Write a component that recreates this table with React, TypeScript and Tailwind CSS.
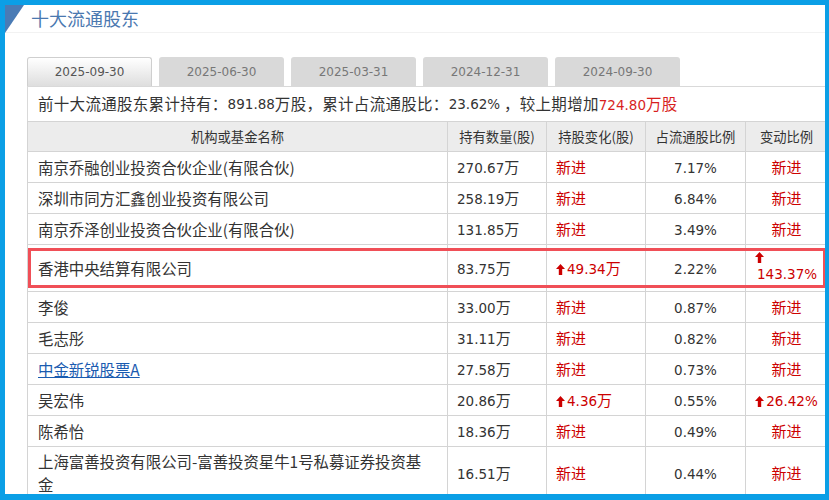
import React from 'react';

// 十大流通股东 panel: period tabs, summary line and the holders table.

type Holder = {
  name: string;
  hold: string;
  change?: string; // undefined => 新进
  pct: string;
  ratio?: string; // undefined => 新进
  link?: boolean;
  highlight?: boolean;
  wrapRatio?: boolean;
};

const TABS = ['2025-09-30', '2025-06-30', '2025-03-31', '2024-12-31', '2024-09-30'];

const HOLDERS: Holder[] = [
  { name: '南京乔融创业投资合伙企业(有限合伙)', hold: '270.67', pct: '7.17%' },
  { name: '深圳市同方汇鑫创业投资有限公司', hold: '258.19', pct: '6.84%' },
  { name: '南京乔泽创业投资合伙企业(有限合伙)', hold: '131.85', pct: '3.49%' },
  { name: '香港中央结算有限公司', hold: '83.75', change: '49.34', pct: '2.22%', ratio: '143.37%', highlight: true, wrapRatio: true },
  { name: '李俊', hold: '33.00', pct: '0.87%' },
  { name: '毛志彤', hold: '31.11', pct: '0.82%' },
  { name: '中金新锐股票A', hold: '27.58', pct: '0.73%', link: true },
  { name: '吴宏伟', hold: '20.86', change: '4.36', pct: '0.55%', ratio: '26.42%' },
  { name: '陈希怡', hold: '18.36', pct: '0.49%' },
  { name: '上海富善投资有限公司-富善投资星牛1号私募证券投资基金', hold: '16.51', pct: '0.44%' },
];

function Num({ children }: { children: React.ReactNode }) {
  return <span className="font-['DejaVu_Sans'] text-[13.5px] tracking-normal">{children}</span>;
}

function UpArrow() {
  return (
    <svg width="9" height="11" viewBox="0 0 9 11" className="mr-[2px] inline-block align-[-1px]">
      <polygon points="4.5,0 9,5 6.2,5 6.2,11 2.8,11 2.8,5 0,5" fill="#cc0000" />
    </svg>
  );
}

const cell = 'border border-[#d4d4d4]';

export default function App() {
  return (
    <div className="relative h-[500px] w-[829px] overflow-hidden border-t-[5px] border-r-4 border-b-[6px] border-l-[5px] border-[#0b9fe6] bg-white font-['Noto_Sans_CJK_SC',sans-serif] text-[#333]">
      <svg width="19" height="28" viewBox="0 0 19 28" className="absolute top-0 left-0">
        <polygon points="0,0 19,0 0,28" fill="#4a7bb5" />
      </svg>

      <div className="h-[28px] border-b border-[#f2f2f2] pl-[26px] text-[18px] leading-[26px] text-[#4a78b0]">十大流通股东</div>

      <div className="mt-[24px] ml-[22px]">
        <div className="flex gap-[7px]">
          {TABS.map((t, i) => (
            <div
              key={t}
              className={
                i === 0
                  ? "flex h-[29px] w-[125px] items-center justify-center rounded-t-[3px] border border-b-0 border-[#cfcfcf] bg-gradient-to-b from-white to-[#dedede] font-['DejaVu_Sans'] text-[12px] text-[#555]"
                  : "flex h-[29px] w-[125px] items-center justify-center rounded-t-[3px] bg-[#d9d9d9] font-['DejaVu_Sans'] text-[12px] text-[#777]"
              }
            >
              {t}
            </div>
          ))}
        </div>

        <div className="flex h-[35px] items-center border-t border-l border-[#d9d9d9] pl-[10px] text-[15.5px] tracking-[0.3px]">
          前十大流通股东累计持有：<Num>891.88</Num>万股，累计占流通股比：<Num>23.62%</Num>&nbsp;，较上期增加
          <span className="text-[#d81e1e]">
            <Num>724.80</Num>万股
          </span>
        </div>

        <table className="w-[800px] table-fixed border-collapse text-[15px]">
          <colgroup>
            <col className="w-[420px]" />
            <col className="w-[99px]" />
            <col className="w-[99px]" />
            <col className="w-[100px]" />
            <col className="w-[82px]" />
          </colgroup>
          <thead>
            <tr className="h-[30px] bg-[#ececec] text-[13.3px]">
              <th className={`${cell} font-normal`}>机构或基金名称</th>
              <th className={`${cell} font-normal`}>持有数量(股)</th>
              <th className={`${cell} font-normal`}>持股变化(股)</th>
              <th className={`${cell} font-normal`}>占流通股比例</th>
              <th className={`${cell} font-normal`}>变动比例</th>
            </tr>
          </thead>
          <tbody>
            {HOLDERS.map((h) => (
              <tr key={h.name} className={h.wrapRatio ? 'h-[47px]' : 'h-[31px]'}>
                <td className={`${cell} relative py-[3px] pr-[14px] pl-[10px] text-[15.4px] leading-[23px]`}>
                  {h.link ? <span className="text-[#1a5bb0] underline">{h.name}</span> : h.name}
                  {h.highlight && (
                    <div className="pointer-events-none absolute top-[3px] bottom-[3px] left-0 w-[798px] border-[3px] border-[#f04f57]" />
                  )}
                </td>
                <td className={`${cell} pl-[9px]`}>
                  <Num>{h.hold}</Num>万
                </td>
                <td className={`${cell} pl-[9px] text-[#cc0000]`}>
                  {h.change ? (
                    <>
                      <UpArrow />
                      <Num>{h.change}</Num>万
                    </>
                  ) : (
                    '新进'
                  )}
                </td>
                <td className={`${cell} text-center`}>
                  <Num>{h.pct}</Num>
                </td>
                <td className={`${cell} text-[#cc0000] ${h.wrapRatio ? 'pl-[9px] leading-[20px]' : 'text-center'}`}>
                  {h.wrapRatio ? (
                    <div className="flex flex-col items-start">
                      <UpArrow />
                      <span className="pl-[2px]">
                        <Num>{h.ratio}</Num>
                      </span>
                    </div>
                  ) : h.ratio ? (
                    <span className="whitespace-nowrap">
                      <UpArrow />
                      <Num>{h.ratio}</Num>
                    </span>
                  ) : (
                    '新进'
                  )}
                </td>
              </tr>
            ))}
          </tbody>
        </table>
      </div>
    </div>
  );
}
